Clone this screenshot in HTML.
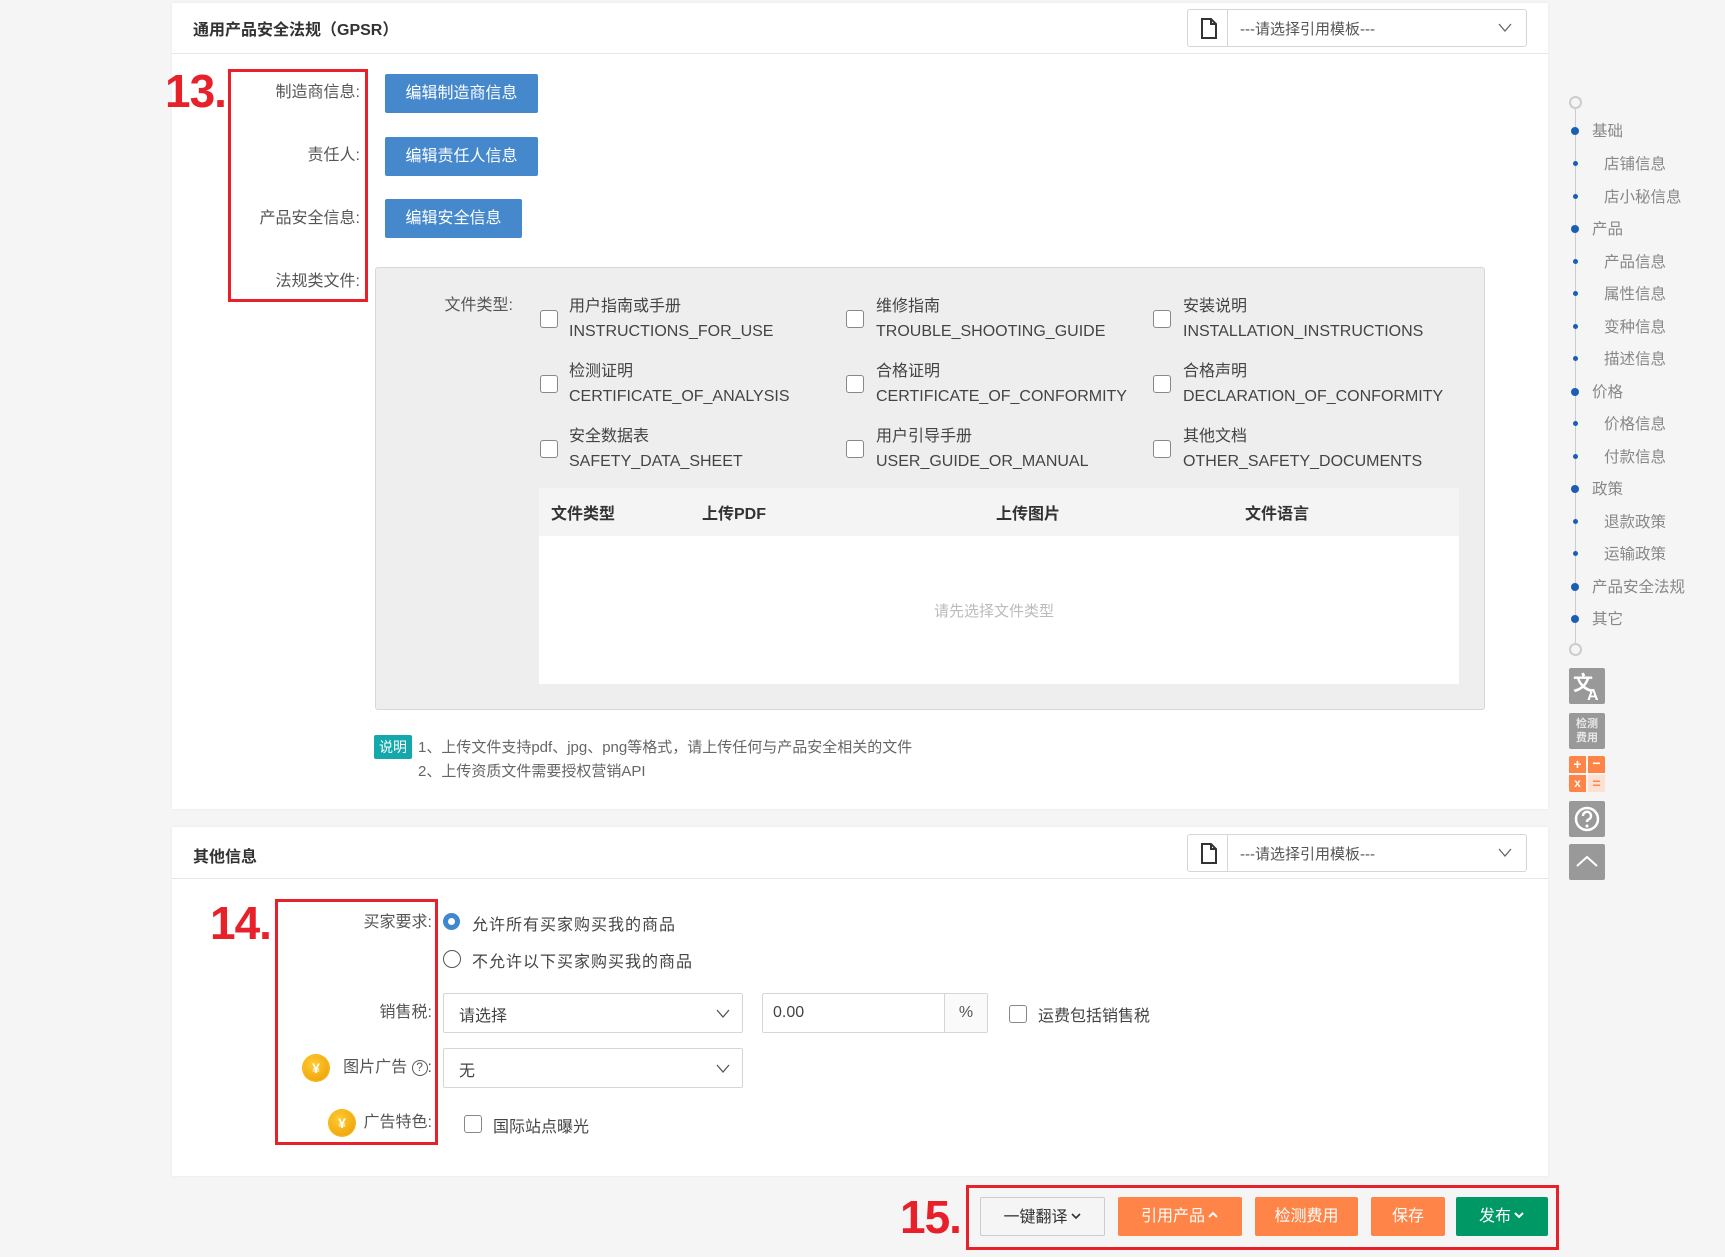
<!DOCTYPE html>
<html><head><meta charset="utf-8">
<style>
*{box-sizing:border-box;margin:0;padding:0}
body{width:1725px;height:1257px;background:#f5f5f5;position:relative;overflow:hidden;font-family:"Liberation Sans","Noto Sans CJK SC",sans-serif;color:#333;font-size:16px}
.a{position:absolute}
.panel{position:absolute;left:172px;width:1376px;background:#fff;box-shadow:0 0 2px rgba(0,0,0,.06)}
.hline{position:absolute;left:0;right:0;height:1px;background:#e6e6e6}
.title{position:absolute;left:21px;font-weight:bold;font-size:16px;color:#333}
.tpl{position:absolute;left:1015px;width:340px;height:38px;border:1px solid #d6d6d6;border-radius:3px;background:#fff}
.tpl .ic{position:absolute;left:0;top:0;width:40px;height:36px;border-right:1px solid #d6d6d6}
.tpl .tx{position:absolute;left:52px;top:8px;font-size:15px;color:#555}
.tpl .ar{position:absolute;right:14px;top:8px}
.lbl{position:absolute;text-align:right;font-size:16px;color:#555;line-height:20px}
.btn{position:absolute;height:39px;background:#4589cc;color:#fff;border-radius:2px;font-size:16px;text-align:center;line-height:39px}
.red{position:absolute;border:3px solid #e8202a}
.num{position:absolute;color:#e8202a;font-weight:bold;font-size:46px;line-height:46px;letter-spacing:-1px}
.cb{position:absolute;width:18px;height:18px;border:1px solid #888;border-radius:3px;background:#fff}
.ct{position:absolute;font-size:16px;color:#444;line-height:25px}
.nav{position:absolute;font-size:15.5px;color:#888;line-height:20px}
.dot{position:absolute;left:1571px;width:8px;height:8px;border-radius:50%;background:#1a5fb4}
.sdot{position:absolute;left:1573px;width:5px;height:5px;border-radius:50%;background:#1a5fb4}
.ib{position:absolute;left:1569px;width:36px;height:36px;background:#999;border-radius:2px}
.sel{position:absolute;height:40px;border:1px solid #d6d6d6;background:#fff;border-radius:2px}
.ob{position:absolute;top:1197px;height:39px;border-radius:2px;color:#fff;font-size:16px;text-align:center;line-height:39px;background:#ff8447}
.ob svg{vertical-align:1px;margin-left:2px}
.coin{position:absolute;width:26px;height:26px;border-radius:50%;background:radial-gradient(circle at 40% 35%,#ffcc33,#eb9a00);color:#fff;font-size:14px;text-align:center;line-height:26px;font-weight:bold;box-shadow:0 0 0 1px #f6b400}
</style></head><body>

<div class="panel" style="top:3px;height:806px">
  <div class="title" style="top:13px">通用产品安全法规（GPSR）</div>
  <div class="hline" style="top:50px"></div>
  <div class="tpl" style="top:6px"><div class="ic"><svg width="40" height="36"><path d="M14 9h9l5 5v14H14z M23 9v5h5" fill="none" stroke="#333" stroke-width="2"/></svg></div><div class="tx">---请选择引用模板---</div><div class="ar"><svg width="14" height="18"><path d="M1 6l6 7 6-7" fill="none" stroke="#666" stroke-width="1.3"/></svg></div></div>
</div>
<div class="num" style="left:165px;top:68px">13.</div>
<div class="red" style="left:228px;top:69px;width:140px;height:233px"></div>
<div class="lbl" style="left:230px;width:130px;top:83px">制造商信息:</div>
<div class="lbl" style="left:230px;width:130px;top:146px">责任人:</div>
<div class="lbl" style="left:230px;width:130px;top:209px">产品安全信息:</div>
<div class="lbl" style="left:230px;width:130px;top:272px">法规类文件:</div>
<div class="btn" style="left:385px;top:74px;width:153px">编辑制造商信息</div>
<div class="btn" style="left:385px;top:137px;width:153px">编辑责任人信息</div>
<div class="btn" style="left:385px;top:199px;width:137px">编辑安全信息</div>

<div class="a" style="left:375px;top:267px;width:1110px;height:443px;background:#eee;border:1px solid #d8d8d8;border-radius:3px"></div>
<div class="lbl" style="left:420px;width:93px;top:296px">文件类型:</div>

<div class="cb" style="left:540px;top:310px"></div><div class="ct" style="left:569px;top:294px">用户指南或手册<br>INSTRUCTIONS_FOR_USE</div>
<div class="cb" style="left:846px;top:310px"></div><div class="ct" style="left:876px;top:294px">维修指南<br>TROUBLE_SHOOTING_GUIDE</div>
<div class="cb" style="left:1153px;top:310px"></div><div class="ct" style="left:1183px;top:294px">安装说明<br>INSTALLATION_INSTRUCTIONS</div>
<div class="cb" style="left:540px;top:375px"></div><div class="ct" style="left:569px;top:359px">检测证明<br>CERTIFICATE_OF_ANALYSIS</div>
<div class="cb" style="left:846px;top:375px"></div><div class="ct" style="left:876px;top:359px">合格证明<br>CERTIFICATE_OF_CONFORMITY</div>
<div class="cb" style="left:1153px;top:375px"></div><div class="ct" style="left:1183px;top:359px">合格声明<br>DECLARATION_OF_CONFORMITY</div>
<div class="cb" style="left:540px;top:440px"></div><div class="ct" style="left:569px;top:424px">安全数据表<br>SAFETY_DATA_SHEET</div>
<div class="cb" style="left:846px;top:440px"></div><div class="ct" style="left:876px;top:424px">用户引导手册<br>USER_GUIDE_OR_MANUAL</div>
<div class="cb" style="left:1153px;top:440px"></div><div class="ct" style="left:1183px;top:424px">其他文档<br>OTHER_SAFETY_DOCUMENTS</div>

<div class="a" style="left:539px;top:488px;width:920px;height:48px;background:#f4f4f4"></div>
<div class="a" style="left:539px;top:536px;width:920px;height:148px;background:#fff"></div>
<div class="a" style="top:500px;left:551px;font-weight:bold;font-size:16px">文件类型</div>
<div class="a" style="top:500px;left:702px;font-weight:bold;font-size:16px">上传PDF</div>
<div class="a" style="top:500px;left:996px;font-weight:bold;font-size:16px">上传图片</div>
<div class="a" style="top:500px;left:1245px;font-weight:bold;font-size:16px">文件语言</div>
<div class="a" style="top:600px;left:934px;font-size:15px;color:#bbb">请先选择文件类型</div>

<div class="a" style="left:374px;top:735px;width:38px;height:24px;background:#14a8ac;color:#fff;font-size:14px;line-height:24px;text-align:center;border-radius:2px">说明</div>
<div class="a" style="left:418px;top:736px;font-size:15px;color:#666;line-height:24px">1、上传文件支持pdf、jpg、png等格式，请上传任何与产品安全相关的文件<br>2、上传资质文件需要授权营销API</div>

<div class="panel" style="top:827px;height:349px">
  <div class="title" style="top:16px">其他信息</div>
  <div class="hline" style="top:51px"></div>
  <div class="tpl" style="top:7px"><div class="ic"><svg width="40" height="36"><path d="M14 9h9l5 5v14H14z M23 9v5h5" fill="none" stroke="#333" stroke-width="2"/></svg></div><div class="tx">---请选择引用模板---</div><div class="ar"><svg width="14" height="18"><path d="M1 6l6 7 6-7" fill="none" stroke="#666" stroke-width="1.3"/></svg></div></div>
</div>
<div class="num" style="left:210px;top:900px">14.</div>
<div class="red" style="left:275px;top:899px;width:163px;height:246px"></div>
<div class="lbl" style="left:290px;width:142px;top:913px">买家要求:</div>
<div class="a" style="left:443px;top:913px;width:17px;height:17px;border-radius:50%;background:#fff;border:5px solid #3f88d0"></div>
<div class="a" style="left:472px;top:911px;font-size:16px;color:#444;letter-spacing:1px">允许所有买家购买我的商品</div>
<div class="a" style="left:443px;top:950px;width:18px;height:18px;border-radius:50%;border:1px solid #555;background:#fff"></div>
<div class="a" style="left:472px;top:948px;font-size:16px;color:#444;letter-spacing:1px">不允许以下买家购买我的商品</div>

<div class="lbl" style="left:290px;width:142px;top:1003px">销售税:</div>
<div class="sel" style="left:443px;top:993px;width:300px"><span class="a" style="left:15px;top:8px;color:#444">请选择</span><svg class="a" style="right:12px;top:11px" width="14" height="18"><path d="M1 5l6 7 6-7" fill="none" stroke="#555" stroke-width="1.3"/></svg></div>
<div class="sel" style="left:762px;top:993px;width:226px"><span class="a" style="left:10px;top:10px;color:#444">0.00</span><div class="a" style="left:181px;top:0;width:43px;height:38px;border-left:1px solid #d6d6d6;background:#fafafa;text-align:center;line-height:38px;color:#555">%</div></div>
<div class="cb" style="left:1009px;top:1005px"></div>
<div class="a" style="left:1038px;top:1002px;color:#444">运费包括销售税</div>

<div class="coin" style="left:303px;top:1055px">¥</div>
<div class="lbl" style="left:290px;width:142px;top:1058px">图片广告 <span style="display:inline-block;width:16px;height:16px;border:1.5px solid #555;border-radius:50%;font-size:12px;line-height:13px;text-align:center;vertical-align:1px">?</span>:</div>
<div class="sel" style="left:443px;top:1048px;width:300px"><span class="a" style="left:15px;top:8px;color:#444">无</span><svg class="a" style="right:12px;top:11px" width="14" height="18"><path d="M1 5l6 7 6-7" fill="none" stroke="#555" stroke-width="1.3"/></svg></div>

<div class="coin" style="left:329px;top:1110px">¥</div>
<div class="lbl" style="left:290px;width:142px;top:1113px">广告特色:</div>
<div class="cb" style="left:464px;top:1115px"></div>
<div class="a" style="left:493px;top:1113px;color:#444">国际站点曝光</div>

<div class="num" style="left:900px;top:1194px">15.</div>
<div class="red" style="left:966px;top:1185px;width:593px;height:65px"></div>
<div class="ob" style="left:980px;width:125px;background:#f5f5f5;color:#333;border:1px solid #ccc">一键翻译<svg width="12" height="10"><path d="M2 3l4 4 4-4" fill="none" stroke="#333" stroke-width="1.6"/></svg></div>
<div class="ob" style="left:1118px;width:124px">引用产品<svg width="12" height="10"><path d="M2 7l4-4 4 4" fill="none" stroke="#fff" stroke-width="2"/></svg></div>
<div class="ob" style="left:1255px;width:103px">检测费用</div>
<div class="ob" style="left:1371px;width:74px">保存</div>
<div class="ob" style="left:1456px;width:92px;background:#009966">发布<svg width="12" height="10"><path d="M2 3l4 4 4-4" fill="none" stroke="#fff" stroke-width="2"/></svg></div>

<div class="a" style="left:1575px;top:102px;width:1px;height:547px;background:#ccc"></div>
<div class="a" style="left:1569px;top:96px;width:13px;height:13px;border:2px solid #ccc;border-radius:50%;background:#f5f5f5"></div>
<div class="a" style="left:1569px;top:643px;width:13px;height:13px;border:2px solid #ccc;border-radius:50%;background:#f5f5f5"></div>
<div class="dot" style="top:127px"></div><div class="nav" style="left:1592px;top:122px">基础</div>
<div class="sdot" style="top:161px"></div><div class="nav" style="left:1604px;top:155px">店铺信息</div>
<div class="sdot" style="top:194px"></div><div class="nav" style="left:1604px;top:188px">店小秘信息</div>
<div class="dot" style="top:225px"></div><div class="nav" style="left:1592px;top:220px">产品</div>
<div class="sdot" style="top:259px"></div><div class="nav" style="left:1604px;top:253px">产品信息</div>
<div class="sdot" style="top:291px"></div><div class="nav" style="left:1604px;top:285px">属性信息</div>
<div class="sdot" style="top:324px"></div><div class="nav" style="left:1604px;top:318px">变种信息</div>
<div class="sdot" style="top:356px"></div><div class="nav" style="left:1604px;top:350px">描述信息</div>
<div class="dot" style="top:388px"></div><div class="nav" style="left:1592px;top:383px">价格</div>
<div class="sdot" style="top:421px"></div><div class="nav" style="left:1604px;top:415px">价格信息</div>
<div class="sdot" style="top:454px"></div><div class="nav" style="left:1604px;top:448px">付款信息</div>
<div class="dot" style="top:485px"></div><div class="nav" style="left:1592px;top:480px">政策</div>
<div class="sdot" style="top:519px"></div><div class="nav" style="left:1604px;top:513px">退款政策</div>
<div class="sdot" style="top:551px"></div><div class="nav" style="left:1604px;top:545px">运输政策</div>
<div class="dot" style="top:583px"></div><div class="nav" style="left:1592px;top:578px">产品安全法规</div>
<div class="dot" style="top:615px"></div><div class="nav" style="left:1592px;top:610px">其它</div>

<div class="ib" style="top:668px"><svg width="36" height="36"><text x="4" y="22" font-size="20" font-weight="bold" fill="#fff" font-family="Noto Sans CJK SC">文</text><text x="18" y="32" font-size="16" font-weight="bold" fill="#fff" font-family="Liberation Sans">A</text></svg></div>
<div class="ib" style="top:713px;color:#e8e8e8;font-size:11px;line-height:14px;text-align:center;padding-top:4px;font-weight:bold">检测<br>费用</div>
<div class="a" style="left:1569px;top:756px;width:36px;height:36px;border-radius:2px;overflow:hidden">
  <div class="a" style="left:0;top:0;width:17px;height:17px;background:#ff8447;color:#fff;font-size:14px;text-align:center;line-height:17px;font-weight:bold">+</div>
  <div class="a" style="left:19px;top:0;width:17px;height:17px;background:#ff8447;color:#fff;font-size:14px;text-align:center;line-height:15px;font-weight:bold">−</div>
  <div class="a" style="left:0;top:19px;width:17px;height:17px;background:#ff8447;color:#fff;font-size:12px;text-align:center;line-height:17px;font-weight:bold">x</div>
  <div class="a" style="left:19px;top:19px;width:17px;height:17px;background:#fde0d0;color:#ff8447;font-size:14px;text-align:center;line-height:17px;font-weight:bold">=</div>
</div>
<div class="ib" style="top:801px"><svg width="36" height="36"><circle cx="18" cy="18" r="11" fill="none" stroke="#fff" stroke-width="2.5"/><path d="M14 15a4 4 0 1 1 5.5 3.5c-1.3.6-1.5 1.3-1.5 2.5" fill="none" stroke="#fff" stroke-width="2.5"/><circle cx="18" cy="25" r="1.5" fill="#fff"/></svg></div>
<div class="ib" style="top:844px"><svg width="36" height="36"><path d="M8 22l10-9 10 9" fill="none" stroke="#fff" stroke-width="2"/></svg></div>

</body></html>
